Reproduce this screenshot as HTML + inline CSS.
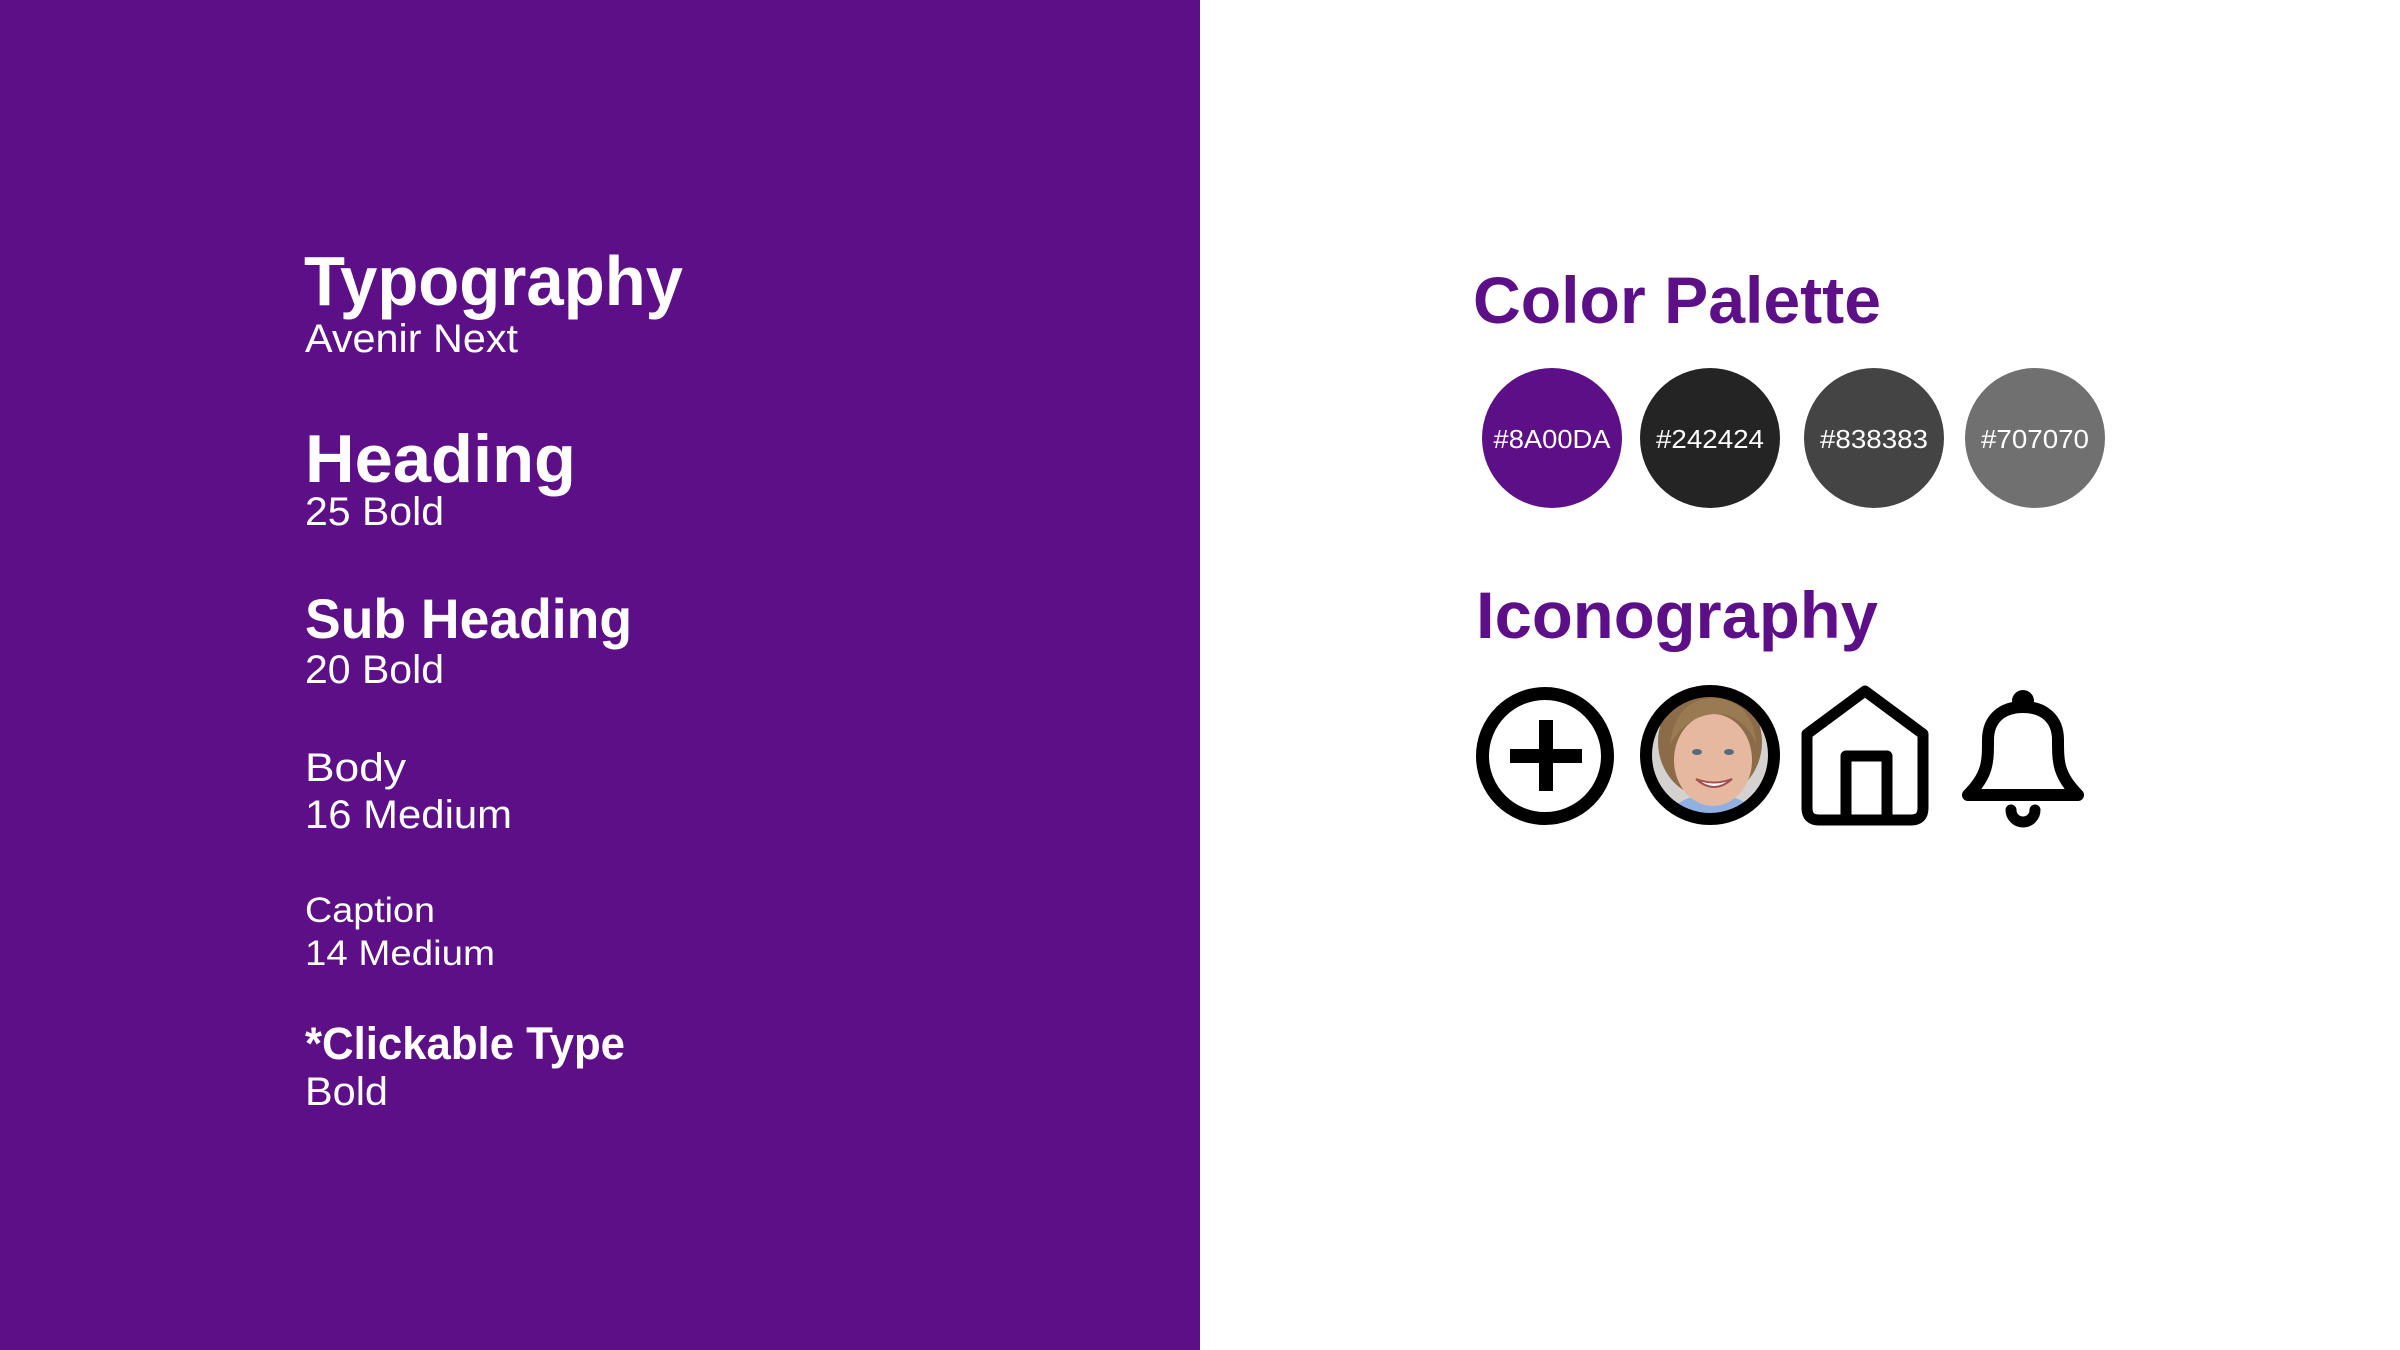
<!DOCTYPE html>
<html><head><meta charset="utf-8"><style>
html,body{margin:0;padding:0;width:2400px;height:1350px;overflow:hidden;background:#fff}
svg{display:block}
</style></head><body>
<svg width="2400" height="1350" viewBox="0 0 2400 1350" xmlns="http://www.w3.org/2000/svg">
<rect x="0" y="0" width="1200" height="1350" fill="#5c0f87"/>
<g fill="#fff" font-family="Liberation Sans, sans-serif">
<text x="304" y="305" font-size="70" font-weight="bold" textLength="379" lengthAdjust="spacingAndGlyphs">Typography</text>
<text x="305" y="352" font-size="40" textLength="213" lengthAdjust="spacingAndGlyphs">Avenir Next</text>
<text x="305" y="482" font-size="68" font-weight="bold" textLength="271" lengthAdjust="spacingAndGlyphs">Heading</text>
<text x="305" y="525" font-size="40" textLength="139" lengthAdjust="spacingAndGlyphs">25 Bold</text>
<text x="305" y="638" font-size="56" font-weight="bold" textLength="327" lengthAdjust="spacingAndGlyphs">Sub Heading</text>
<text x="305" y="683" font-size="40" textLength="139" lengthAdjust="spacingAndGlyphs">20 Bold</text>
<text x="305" y="781" font-size="40" textLength="101" lengthAdjust="spacingAndGlyphs">Body</text>
<text x="305" y="828" font-size="40" textLength="207" lengthAdjust="spacingAndGlyphs">16 Medium</text>
<text x="305" y="922" font-size="35" textLength="130" lengthAdjust="spacingAndGlyphs">Caption</text>
<text x="305" y="965" font-size="35" textLength="190" lengthAdjust="spacingAndGlyphs">14 Medium</text>
<text x="305" y="1059" font-size="45" font-weight="bold" textLength="320" lengthAdjust="spacingAndGlyphs">*Clickable Type</text>
<text x="305" y="1105" font-size="40" textLength="83" lengthAdjust="spacingAndGlyphs">Bold</text>
</g>
<g fill="#5c0f87" font-family="Liberation Sans, sans-serif" font-weight="bold" font-size="66">
<text x="1473" y="323" textLength="408" lengthAdjust="spacingAndGlyphs">Color Palette</text>
<text x="1476" y="638" textLength="402" lengthAdjust="spacingAndGlyphs">Iconography</text>
</g>
<circle cx="1552" cy="438" r="70" fill="#5c0f87"/>
<circle cx="1710" cy="438" r="70" fill="#242424"/>
<circle cx="1874" cy="438" r="70" fill="#444444"/>
<circle cx="2035" cy="438" r="70" fill="#707070"/>
<g fill="#fff" font-family="Liberation Sans, sans-serif" font-size="26" text-anchor="middle">
<text x="1552" y="448" textLength="117" lengthAdjust="spacingAndGlyphs">#8A00DA</text>
<text x="1710" y="448" textLength="108" lengthAdjust="spacingAndGlyphs">#242424</text>
<text x="1874" y="448" textLength="108" lengthAdjust="spacingAndGlyphs">#838383</text>
<text x="2035" y="448" textLength="108" lengthAdjust="spacingAndGlyphs">#707070</text>
</g>
<!-- plus -->
<circle cx="1545" cy="756" r="62.5" fill="none" stroke="#000" stroke-width="13"/>
<rect x="1510" y="749" width="72" height="14" fill="#000"/>
<rect x="1539" y="720" width="14" height="71" fill="#000"/>
<!-- photo -->
<defs><clipPath id="pc"><circle cx="1710" cy="755" r="64"/></clipPath></defs>
<g clip-path="url(#pc)">
<rect x="1640" y="685" width="140" height="140" fill="#d4d2d0"/>
<ellipse cx="1710" cy="742" rx="52" ry="56" fill="#8c6c48"/>
<path d="M1662 830 Q1668 795 1712 795 Q1756 795 1764 830 Z" fill="#8fb0e0"/>
<ellipse cx="1713" cy="760" rx="39" ry="46" fill="#e6b8a0"/>
<path d="M1670 745 Q1675 700 1712 698 Q1752 700 1756 742 Q1740 712 1714 714 Q1686 716 1670 745 Z" fill="#9a7a52"/>
<ellipse cx="1697" cy="752" rx="5" ry="3" fill="#5a6a7a"/>
<ellipse cx="1729" cy="752" rx="5" ry="3" fill="#5a6a7a"/>
<path d="M1696 779 Q1714 795 1732 779 Q1714 786 1696 779 Z" fill="#fff" stroke="#a05050" stroke-width="2"/>
</g>
<circle cx="1710" cy="755" r="64" fill="none" stroke="#000" stroke-width="12"/>
<!-- house -->
<path d="M1807 734 L1865 691 L1923 734 L1923 808 Q1923 820 1911 820 L1819 820 Q1807 820 1807 808 Z" fill="none" stroke="#000" stroke-width="11" stroke-linejoin="round"/>
<path d="M1846 820 L1846 756 L1887 756 L1887 820" fill="none" stroke="#000" stroke-width="11" stroke-linejoin="round"/>
<!-- bell -->
<path d="M1968 795 C1988 775 1988 762 1988 740 C1988 718 2003 707 2023 707 C2043 707 2058 718 2058 740 C2058 762 2058 775 2078 795 Z" fill="none" stroke="#000" stroke-width="12" stroke-linejoin="round"/>
<circle cx="2023" cy="701" r="11" fill="#000"/>
<path d="M2011 810 A12 12 0 0 0 2035 810" fill="none" stroke="#000" stroke-width="11" stroke-linecap="round"/>
</svg>
</body></html>
